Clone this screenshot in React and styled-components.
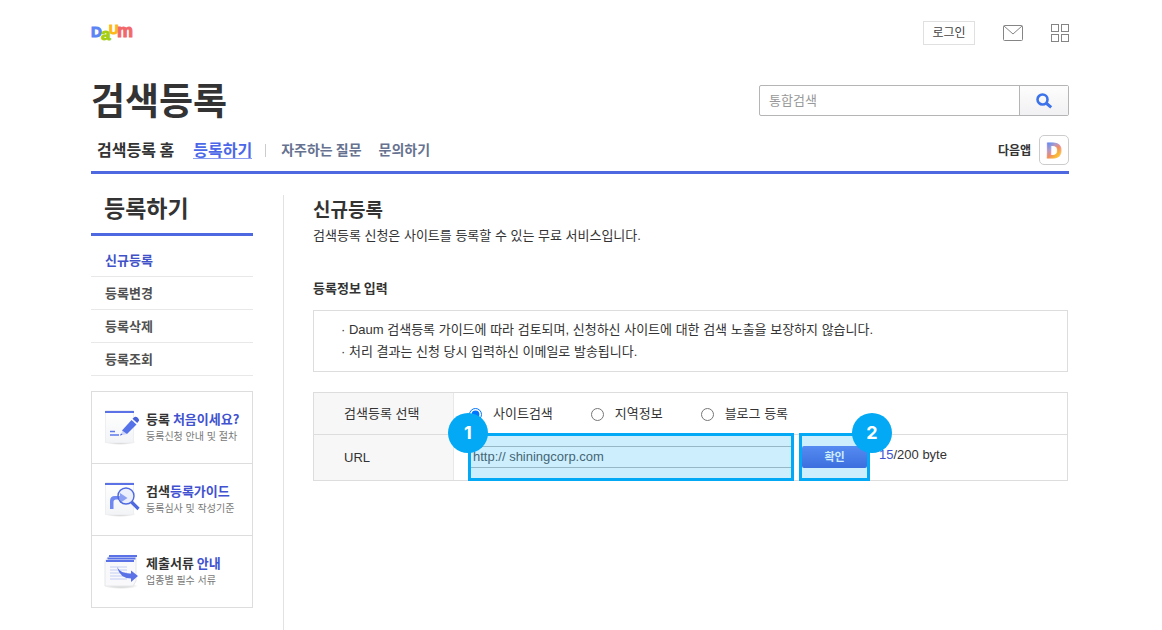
import React, { useState } from 'react';
import styled, { createGlobalStyle } from 'styled-components';

const blue = '#4e68e2';
const cyan = '#03a9f4';

const menu = ['신규등록', '등록변경', '등록삭제', '등록조회'];
const searchTypes = ['사이트검색', '지역정보', '블로그 등록'];

const DaumLogo = () => (
  <svg width="48" height="36" viewBox="0 0 48 36" role="img" aria-label="Daum">
    <LogoLetter x="0" y="22" $size={15} fill="#5b84f5" stroke="#5b84f5">D</LogoLetter>
    <LogoLetter x="10" y="25" $size={17} fill="#a5cf10" stroke="#a5cf10">a</LogoLetter>
    <LogoLetter x="18" y="19" $size={13} fill="#fdb813" stroke="#fdb813">U</LogoLetter>
    <LogoLetter x="26" y="22" $size={18} fill="#f2676a" stroke="#f2676a">m</LogoLetter>
  </svg>
);

const MailIcon = () => (
  <svg width="20" height="16" viewBox="0 0 20 16" fill="none" stroke="#858585">
    <rect x="0.5" y="0.5" width="19" height="15" rx="1" />
    <path d="M1 1l9 8 9-8" />
  </svg>
);

const GridIcon = () => (
  <svg width="18" height="18" viewBox="0 0 18 18" fill="none" stroke="#858585">
    <rect x="0.5" y="0.5" width="7" height="7" />
    <rect x="10.5" y="0.5" width="7" height="7" />
    <rect x="0.5" y="10.5" width="7" height="7" />
    <rect x="10.5" y="10.5" width="7" height="7" />
  </svg>
);

const SearchIcon = () => (
  <svg width="17" height="16" viewBox="0 0 17 16" fill="none" stroke="#3d73ea">
    <circle cx="6.5" cy="6.5" r="5" strokeWidth="2.6" />
    <path d="M10 10l5.2 4.4" strokeWidth="3" />
  </svg>
);

const AppIcon = () => (
  <svg width="28" height="28" viewBox="0 0 28 28" aria-hidden="true">
    <defs>
      <linearGradient id="appD" x1="0" y1="0" x2="0.6" y2="1">
        <stop offset="0.2" stopColor="#5d8df5" />
        <stop offset="0.45" stopColor="#b39ac4" />
        <stop offset="0.62" stopColor="#f08a6a" />
        <stop offset="0.85" stopColor="#fbc02d" />
      </linearGradient>
    </defs>
    <LogoLetter x="6" y="22" $size={22} fill="url(#appD)" stroke="url(#appD)">D</LogoLetter>
  </svg>
);

// sheet of paper with a blue top edge, shared by the banner icons
const Sheet = ({ id }) => (
  <>
    <defs>
      <linearGradient id={id} x1="0" y1="0" x2="0" y2="1">
        <stop offset="0" stopColor="#fff" />
        <stop offset="1" stopColor="#f3f4f6" />
      </linearGradient>
      <radialGradient id={`${id}Shadow`}>
        <stop offset="0.5" stopColor="#ddd" />
        <stop offset="1" stopColor="#fff" />
      </radialGradient>
    </defs>
    <ellipse cx="17" cy="33" rx="16" ry="3" fill={`url(#${id}Shadow)`} />
    <path d="M2.5 1.5h28v32h-28z" fill={`url(#${id})`} stroke="#eeeff2" />
    <path d="M2 2h29v2H2z" fill="#5a72e6" />
  </>
);

const PencilIcon = () => (
  <svg width="38" height="38" viewBox="0 0 38 38" aria-hidden="true">
    <Sheet id="sheetPencil" />
    <path d="M7 22.5h5M7 26h9" stroke="#5f78ea" strokeWidth="1.6" />
    <path d="M17 26.500l2.500-4.500 5 3z" fill="#cdd5f8" />
    <path d="M17 26.500l1-2 1.500 1.300z" fill="#4861d8" />
    <path d="M19 21.500L28.500 11l5 4.500L24 25z" fill="#5672e8" />
    <path d="M29.500 9.800l2-1.800q1.500-.8 3 .6l1.200 1.500q1 1.500-.3 2.500l-1.200 1.500z" fill="#4861d8" />
  </svg>
);

const GuideIcon = () => (
  <svg width="38" height="38" viewBox="0 0 38 38" aria-hidden="true">
    <Sheet id="sheetGuide" />
    <path d="M7 28V20q0-5 5-5h5v-3l7.500 5-7.500 5v-3.500h-4q-2.500 0-2.500 2.500v7z" fill="#7088f0" />
    <circle cx="23" cy="15" r="8" fill="#c9d3fb" fillOpacity="0.3" stroke="#4f69df" strokeWidth="1.400" />
    <path d="M28.500 21l7 7" stroke="#4f69df" strokeWidth="3.200" />
  </svg>
);

const PapersIcon = () => (
  <svg width="38" height="38" viewBox="0 0 38 38" aria-hidden="true">
    <defs>
      <radialGradient id="papersShadow">
        <stop offset="0.5" stopColor="#ddd" />
        <stop offset="1" stopColor="#fff" />
      </radialGradient>
    </defs>
    <ellipse cx="18" cy="33" rx="17" ry="3" fill="url(#papersShadow)" />
    <path d="M6 3h27v25l-3 5H2V8z" fill="#f9f9fb" stroke="#e6e7ea" />
    <path d="M6 3h28M4.500 5.500h28M3 8h28" stroke="#5a72e6" strokeWidth="1.800" />
    <path d="M7 14h17M7 17h17M7 20h17M7 23h14M7 26h17" stroke="#c5cdf5" />
    <path d="M14 14q4 7 14 6.500v-3l7 5.500-7 6v-3.500q-11 0-14-11.500z" fill="#5a72e6" />
  </svg>
);

const banners = [
  { icon: <PencilIcon />, title: <>등록 <em>처음이세요?</em></>, text: '등록신청 안내 및 절차' },
  { icon: <GuideIcon />, title: <>검색<em>등록가이드</em></>, text: '등록심사 및 작성기준' },
  { icon: <PapersIcon />, title: <>제출서류 <em>안내</em></>, text: '업종별 필수 서류' },
];

const App = () => {
  const [type, setType] = useState(searchTypes[0]);
  const [url, setUrl] = useState('http:// shiningcorp.com');

  return (
    <Page>
      <GlobalStyle />
      <TopBar>
        <a href="#daum"><DaumLogo /></a>
        <TopMenu>
          <LoginButton type="button">로그인</LoginButton>
          <IconButton type="button" aria-label="메일"><MailIcon /></IconButton>
          <IconButton type="button" aria-label="서비스 전체보기"><GridIcon /></IconButton>
        </TopMenu>
      </TopBar>
      <TitleBar>
        <ServiceTitle>검색등록</ServiceTitle>
        <SearchForm onSubmit={e => e.preventDefault()}>
          <SearchInput placeholder="통합검색" aria-label="통합검색" />
          <SearchButton aria-label="검색"><SearchIcon /></SearchButton>
        </SearchForm>
      </TitleBar>
      <Nav>
        <NavLink href="#home">검색등록 홈</NavLink>
        <NavLink href="#register" $active>등록하기</NavLink>
        <NavDivider />
        <SubLink href="#faq">자주하는 질문</SubLink>
        <SubLink href="#ask">문의하기</SubLink>
        <AppLink href="#app">다음앱<AppBadge><AppIcon /></AppBadge></AppLink>
      </Nav>

      <Columns>
        <Sidebar>
          <SideTitle>등록하기</SideTitle>
          <SideMenu>
            {menu.map((item, i) => (
              <li key={item}><SideLink href="#menu" $active={i === 0}>{item}</SideLink></li>
            ))}
          </SideMenu>
          <Banners>
            {banners.map(banner => (
              <Banner href="#guide" key={banner.text}>
                {banner.icon}
                <div>
                  <BannerTitle>{banner.title}</BannerTitle>
                  <BannerText>{banner.text}</BannerText>
                </div>
              </Banner>
            ))}
          </Banners>
        </Sidebar>

        <Main>
          <PageTitle>신규등록</PageTitle>
          <Lead>검색등록 신청은 사이트를 등록할 수 있는 무료 서비스입니다.</Lead>
          <SectionTitle>등록정보 입력</SectionTitle>
          <Notice>
            <li>· Daum 검색등록 가이드에 따라 검토되며, 신청하신 사이트에 대한 검색 노출을 보장하지 않습니다.</li>
            <li>· 처리 결과는 신청 당시 입력하신 이메일로 발송됩니다.</li>
          </Notice>
          <Form onSubmit={e => e.preventDefault()}>
            <FormRow role="radiogroup" aria-labelledby="type-label">
              <FormLabel as="span" id="type-label">검색등록 선택</FormLabel>
              <Options>
                {searchTypes.map(item => (
                  <Option key={item}>
                    <Radio name="type" checked={type === item} onChange={() => setType(item)} />
                    {item}
                  </Option>
                ))}
              </Options>
            </FormRow>
            <FormRow>
              <FormLabel htmlFor="url">URL</FormLabel>
              <UrlCell>
                <UrlField>
                  <UrlInput id="url" value={url} onChange={e => setUrl(e.target.value)} />
                  <Highlight />
                  <Step $side="left">1</Step>
                </UrlField>
                <ConfirmField>
                  <ConfirmButton>확인</ConfirmButton>
                  <Highlight />
                  <Step $side="right">2</Step>
                </ConfirmField>
                <ByteCount><em>15</em>/200 byte</ByteCount>
              </UrlCell>
            </FormRow>
          </Form>
        </Main>
      </Columns>
    </Page>
  );
};

const GlobalStyle = createGlobalStyle`
  * {
    box-sizing: border-box;
  }
  body {
    margin: 0;
    background: #fff;
    color: #333;
    font: 13px/22px 'Liberation Sans', 'Noto Sans CJK KR', sans-serif;
  }
  h1, h2, h3, p, ul {
    margin: 0;
    padding: 0;
  }
  h1, h2, h3, nav, strong {
    font-family: 'Noto Sans CJK KR', sans-serif;
  }
  ul {
    list-style: none;
  }
  a {
    color: inherit;
    text-decoration: none;
  }
  em {
    color: #4152d0;
    font-style: normal;
  }
  button, input {
    font: inherit;
  }
  svg {
    display: block;
    flex: none;
  }
`;

const LogoLetter = styled.text`
  font-family: 'Liberation Sans', sans-serif;
  font-size: ${props => props.$size}px;
  font-weight: 700;
  stroke-width: 1px;
`;

const Page = styled.div`
  display: flex;
  flex-direction: column;
  min-height: 100vh;
  padding: 0 93px 0 91px;
`;

const TopBar = styled.header`
  display: flex;
  align-items: center;
  justify-content: space-between;
  height: 66px;
`;

const TopMenu = styled.div`
  display: flex;
  align-items: center;
  gap: 28px;
`;

const LoginButton = styled.button`
  width: 52px;
  height: 24px;
  padding: 0;
  border: 1px solid #e0e0e0;
  background: #fff;
  color: #444;
  font-size: 12px;
  line-height: 20px;
`;

const IconButton = styled.button`
  padding: 0;
  border: 0;
  background: none;
`;

const TitleBar = styled.div`
  display: flex;
  align-items: center;
  justify-content: space-between;
  height: 69px;
`;

const ServiceTitle = styled.h1`
  padding-bottom: 4px;
  font-size: 37px;
  line-height: 44px;
`;

const SearchForm = styled.form`
  display: flex;
  width: 310px;
  height: 31px;
  border: 1px solid #b5b5b5;
  border-radius: 2px;
`;

const SearchInput = styled.input`
  flex: 1;
  min-width: 0;
  padding: 0 9px;
  border: 0;
  outline: 0;
  background: none;
  &::placeholder {
    color: #999;
  }
`;

const SearchButton = styled.button`
  display: flex;
  align-items: center;
  justify-content: center;
  width: 49px;
  padding: 0;
  border: 0;
  border-left: 1px solid #b5b5b5;
  background: linear-gradient(#fdfdfd, #f1f1f3);
`;

const Nav = styled.nav`
  display: flex;
  align-items: center;
  height: 39px;
  padding: 0 0 6px 6px;
  border-bottom: 3px solid ${blue};
  font-weight: 700;
`;

const NavLink = styled.a`
  margin: 0 19px 2px 0;
  border-bottom: 1px solid ${props => props.$active ? '#8b9df0' : 'transparent'};
  color: ${props => props.$active ? '#4c68e8' : '#333'};
  font-size: 16px;
  line-height: 18px;
`;

const NavDivider = styled.span`
  width: 1px;
  height: 13px;
  margin: 0 15px 0 -6px;
  background: #ccc;
`;

const SubLink = styled.a`
  margin: 0 17px 2px 0;
  color: #66728f;
  font-size: 14px;
`;

const AppLink = styled.a`
  display: flex;
  align-items: center;
  gap: 8px;
  margin-left: auto;
  font-size: 12px;
`;

const AppBadge = styled.span`
  display: flex;
  align-items: center;
  justify-content: center;
  width: 30px;
  height: 30px;
  border: 1px solid #ccc;
  border-radius: 5px;
`;

const Columns = styled.div`
  display: flex;
  flex: 1;
  padding-top: 21px;
`;

const Sidebar = styled.aside`
  flex: none;
  width: 162px;
`;

const SideTitle = styled.h2`
  height: 41px;
  padding-left: 13px;
  border-bottom: 3px solid ${blue};
  font-size: 23px;
  line-height: 24px;
`;

const SideMenu = styled.ul`
  padding-top: 8px;
`;

const SideLink = styled.a`
  display: block;
  height: 33px;
  padding: 6px 14px 0;
  border-bottom: 1px solid #e8e8e8;
  color: ${props => props.$active ? '#4152c8' : '#505050'};
  font-weight: 700;
`;

const Banners = styled.div`
  margin-top: 15px;
  border: 1px solid #ddd;
  border-bottom: 0;
`;

const Banner = styled.a`
  display: flex;
  align-items: center;
  gap: 5px;
  height: 72px;
  padding-left: 11px;
  border-bottom: 1px solid #ddd;
  white-space: nowrap;
`;

const BannerTitle = styled.strong`
  display: block;
  line-height: 18px;
`;

const BannerText = styled.span`
  display: block;
  color: #777;
  font-size: 10px;
  line-height: 18px;
`;

const Main = styled.main`
  flex: 1;
  min-width: 0;
  margin-left: 30px;
  padding: 0 1px 0 29px;
  border-left: 1px solid #e2e2e2;
`;

const PageTitle = styled.h2`
  font-size: 19px;
  line-height: 28px;
`;

const Lead = styled.p`
  padding-top: 2px;
`;

const SectionTitle = styled.h3`
  margin-top: 30px;
  font-size: 13px;
`;

const Notice = styled.ul`
  margin-top: 11px;
  padding: 8px 27px;
  border: 1px solid #ddd;
`;

const Form = styled.form`
  margin-top: 20px;
  border: 1px solid #ddd;
`;

const FormRow = styled.div`
  display: flex;
  height: 41px;
  & + & {
    height: 46px;
    border-top: 1px solid #ddd;
  }
`;

const FormLabel = styled.label`
  display: flex;
  align-items: center;
  flex: none;
  width: 140px;
  padding-left: 30px;
  border-right: 1px solid #e8e8e8;
  background: #f7f7f7;
`;

const Options = styled.div`
  display: flex;
  align-items: center;
  gap: 38px;
  padding-left: 15px;
`;

const Option = styled.label`
  display: flex;
  align-items: center;
  gap: 11px;
`;

const Radio = styled.input.attrs({ type: 'radio' })`
  width: 13px;
  height: 13px;
  margin: 2px 0 0;
`;

const UrlCell = styled.div`
  display: flex;
  flex: 1;
  padding: 0 0 2px 14px;
`;

const UrlField = styled.div`
  position: relative;
  display: flex;
  align-items: center;
  width: 326px;
`;

const UrlInput = styled.input`
  width: 100%;
  height: 22px;
  padding: 0 4px;
  border: 1px solid #bbb;
  background: #fff;
  color: #555;
`;

const ConfirmField = styled.div`
  position: relative;
  display: flex;
  align-items: center;
  width: 71px;
  margin-left: 5px;
  padding: 0 3px;
`;

const ConfirmButton = styled.button`
  width: 100%;
  height: 22px;
  padding: 0;
  border: 0;
  border-radius: 2px;
  background: linear-gradient(#6a84f2, #4a60d8);
  color: #fff;
  font-size: 11px;
  font-weight: 700;
  line-height: 20px;
`;

const Highlight = styled.span`
  position: absolute;
  inset: -2px 0 -3px;
  border: 3px solid ${cyan};
  background: rgba(3, 169, 244, 0.2);
  pointer-events: none;
`;

const Step = styled.span`
  position: absolute;
  top: -22px;
  ${props => props.$side}: ${props => props.$side === 'left' ? -20 : -22}px;
  width: 40px;
  height: 40px;
  border-radius: 50%;
  background: ${cyan};
  color: #fff;
  font: 700 18px/40px Inter, sans-serif;
  text-align: center;
`;

const ByteCount = styled.span`
  align-self: center;
  padding: 0 0 4px 9px;
`;

export default App;
